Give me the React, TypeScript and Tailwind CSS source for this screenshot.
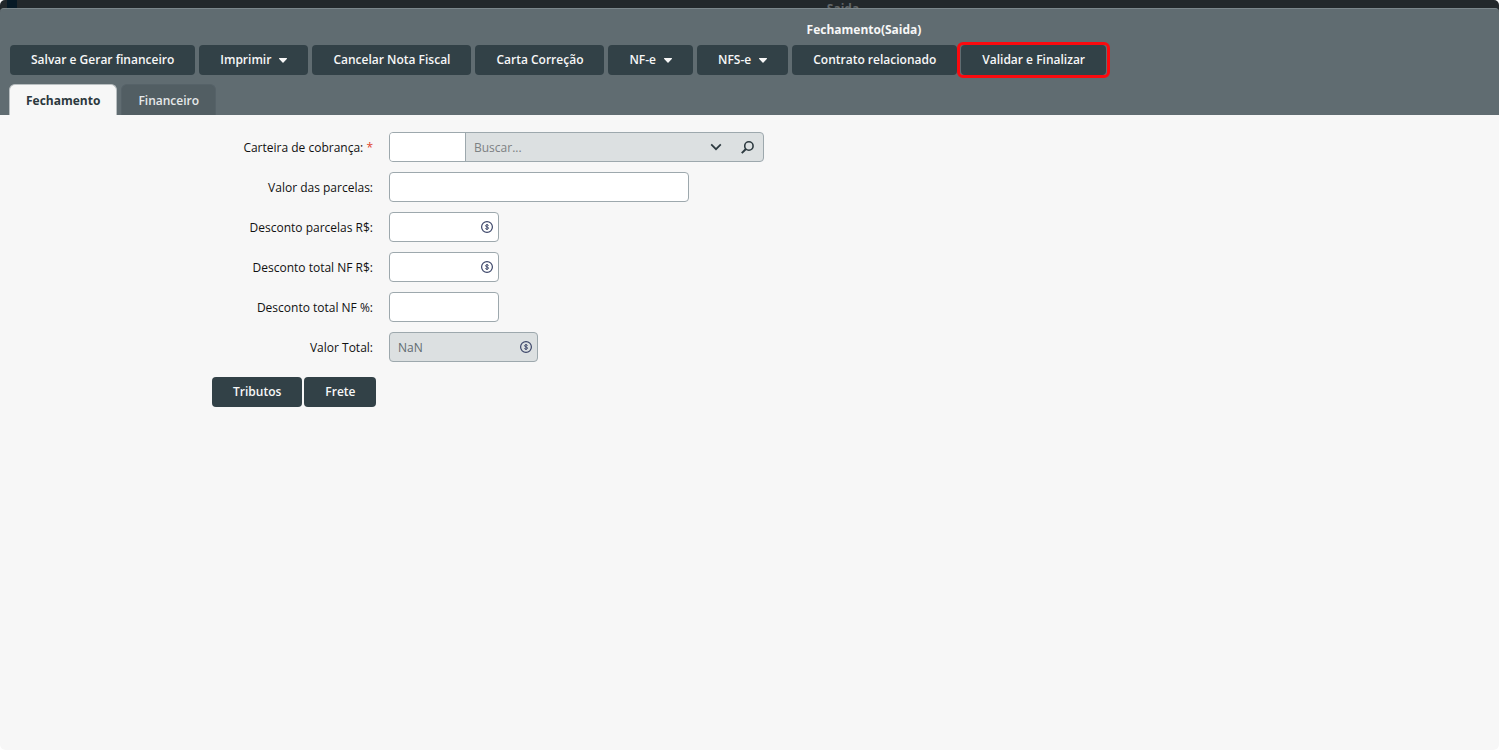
import type { ReactNode } from 'react';
import clsx from 'clsx';

interface Action {
  label: string;
  menu?: boolean;
  highlighted?: boolean;
}

const ACTIONS: Action[] = [
  { label: 'Salvar e Gerar financeiro' },
  { label: 'Imprimir', menu: true },
  { label: 'Cancelar Nota Fiscal' },
  { label: 'Carta Correção' },
  { label: 'NF-e', menu: true },
  { label: 'NFS-e', menu: true },
  { label: 'Contrato relacionado' },
  { label: 'Validar e Finalizar', highlighted: true },
];

const FIELD = 'h-[30px] rounded border border-[#9da8ad] px-2 text-[#5f6b70] outline-none';

function CaretIcon() {
  return (
    <svg width="8" height="5" viewBox="0 0 8 5" fill="currentColor" aria-hidden="true">
      <path d="M.6 0h6.8c.6 0 .8.5.4.9L4.5 4.6c-.3.3-.7.3-1 0L.2.9C-.2.5 0 0 .6 0Z" />
    </svg>
  );
}

function CoinIcon() {
  return (
    <svg
      width="12"
      height="12"
      viewBox="0 0 12 12"
      fill="none"
      stroke="#3c4669"
      className="pointer-events-none absolute right-[6px] top-[9px]"
      aria-hidden="true"
    >
      <circle cx="6" cy="6" r="5.4" strokeWidth="1.2" />
      <path d="M7.6 4.5C7.3 4 6.7 3.8 6 3.8c-.9 0-1.5.4-1.5 1 0 1.5 3.1.8 3.1 2.3 0 .7-.7 1.1-1.6 1.1-.8 0-1.4-.3-1.7-.8M6 3v6" />
    </svg>
  );
}

function ActionButton({ label, menu, highlighted }: Action) {
  return (
    <div className="relative">
      <button
        type="button"
        className="flex h-[30px] items-center gap-2 whitespace-nowrap rounded bg-[#324147] px-[21px] font-semibold text-[#f7f7f7]"
      >
        {label}
        {menu && <CaretIcon />}
      </button>
      {highlighted && (
        <span className="pointer-events-none absolute -bottom-[3px] -left-[4px] -right-[4px] -top-[3px] rounded-md border-[3px] border-[#fb0a0f]" />
      )}
    </div>
  );
}

interface FieldRowProps {
  id: string;
  label: string;
  required?: boolean;
  children: ReactNode;
}

function FieldRow({ id, label, required, children }: FieldRowProps) {
  return (
    <div className="grid grid-cols-[373px_1fr] items-center gap-4">
      <label htmlFor={id} className="pt-[2px] text-right text-[#111]">
        {label}
        {required && <span className="text-[#e0442e]"> *</span>}
      </label>
      <div className="flex">{children}</div>
    </div>
  );
}

function MoneyInput({ id }: { id: string }) {
  return (
    <div className="relative">
      <input id={id} type="text" className={clsx(FIELD, 'w-[110px] bg-white')} />
      <CoinIcon />
    </div>
  );
}

export default function App() {
  return (
    <div className="flex min-h-screen flex-col overflow-hidden rounded-[5px] bg-white font-['Open_Sans',sans-serif] text-xs">
      <div className="bg-[#22282b]">
        {/* Strip of the screen behind the modal */}
        <div className="flex h-2 overflow-hidden">
          <div className="ml-[7px] w-[10px] bg-[#071a26]" />
          <div className="flex-1 pl-[170px] text-center font-bold leading-[18px] text-[#626769]">Saida</div>
        </div>

        <header className="rounded-t border-t border-[#7b878b] bg-[#606c71]">
          <h1 className="pl-[229px] pt-[13px] text-center font-bold leading-4 text-[#f7f7f7]">
            Fechamento(Saida)
          </h1>

          <div className="mt-[7px] flex gap-1 px-[10px]">
            {ACTIONS.map((a) => (
              <ActionButton key={a.label} {...a} />
            ))}
          </div>

          <div role="tablist" className="mt-[9px] flex gap-1 px-[9px]">
            <button
              type="button"
              role="tab"
              aria-selected="true"
              className="h-[31px] rounded-t-md border-x border-t border-[#b9bfc1] bg-[#f7f7f7] px-4 pt-[2px] font-bold text-[#2b383d]"
            >
              Fechamento
            </button>
            <button
              type="button"
              role="tab"
              aria-selected="false"
              className="h-[31px] rounded-t-md border-x border-t border-[#566268] bg-[#525e63] px-4 pt-[2px] font-semibold text-[#e6e9ea]"
            >
              Financeiro
            </button>
          </div>
        </header>
      </div>

      <main className="flex-1 rounded-b-[5px] bg-[#f7f7f7] pt-[17px]">
        <form className="flex flex-col gap-[10px]">
          <FieldRow id="carteira" label="Carteira de cobrança:" required>
            <div className="flex h-[30px] w-[375px] overflow-hidden rounded border border-[#9da8ad] bg-[#dce0e1]">
              <input
                id="carteira"
                type="text"
                className="w-[76px] border-r border-[#9da8ad] bg-white px-2 outline-none"
              />
              <input
                type="text"
                placeholder="Buscar..."
                aria-label="Buscar carteira de cobrança"
                className="min-w-0 flex-1 px-2 pt-[2px] outline-none placeholder:text-[#7c8183]"
              />
              <button type="button" aria-label="Abrir lista" className="flex w-8 items-center justify-center">
                <svg width="12" height="8" viewBox="0 0 12 8" fill="none" stroke="#2d3a40" strokeWidth="1.7">
                  <path d="M1.2 1.4 6 6.2l4.8-4.8" />
                </svg>
              </button>
              <button type="button" aria-label="Pesquisar" className="flex w-[31px] items-center justify-center">
                <svg width="13" height="13" viewBox="0 0 13 13" fill="none" stroke="#2d3a40" strokeWidth="1.6">
                  <circle cx="7.9" cy="5" r="4.2" />
                  <path d="M4.9 8 .8 12.1" strokeWidth="2" />
                </svg>
              </button>
            </div>
          </FieldRow>
          <FieldRow id="parcelas" label="Valor das parcelas:">
            <input id="parcelas" type="text" className={clsx(FIELD, 'w-[300px] bg-white')} />
          </FieldRow>
          <FieldRow id="desconto-parcelas" label="Desconto parcelas R$:">
            <MoneyInput id="desconto-parcelas" />
          </FieldRow>
          <FieldRow id="desconto-nf" label="Desconto total NF R$:">
            <MoneyInput id="desconto-nf" />
          </FieldRow>
          <FieldRow id="desconto-pct" label="Desconto total NF %:">
            <input id="desconto-pct" type="text" className={clsx(FIELD, 'w-[110px] bg-white')} />
          </FieldRow>
          <FieldRow id="total" label="Valor Total:">
            <div className="relative">
              <input
                id="total"
                type="text"
                readOnly
                defaultValue="NaN"
                className={clsx(FIELD, 'w-[149px] bg-[#dce0e1]')}
              />
              <CoinIcon />
            </div>
          </FieldRow>
        </form>

        <div className="mt-[15px] flex gap-[2px] pl-[212px]">
          <ActionButton label="Tributos" />
          <ActionButton label="Frete" />
        </div>
      </main>
    </div>
  );
}
